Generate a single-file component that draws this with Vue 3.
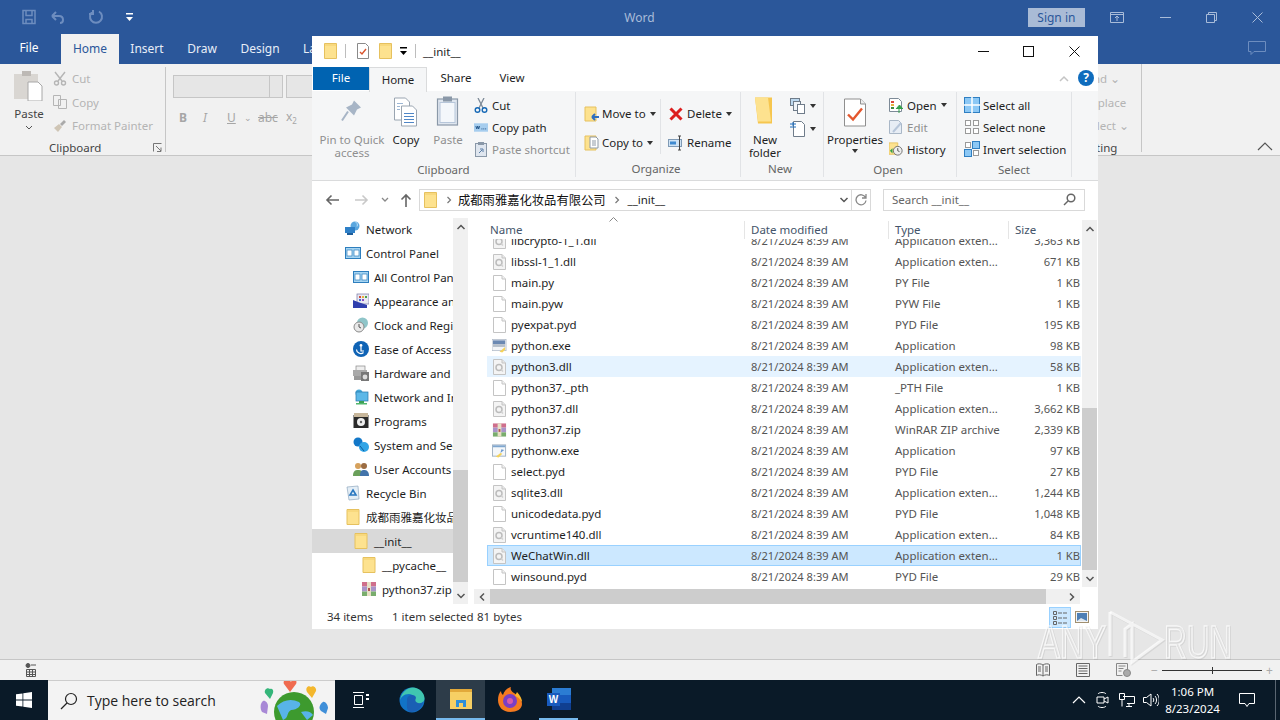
<script setup>
const files = [
  { name: 'libcrypto-1_1.dll', type: 'Application exten...', size: '3,363 KB', icon: 'dll' },
  { name: 'libssl-1_1.dll', type: 'Application exten...', size: '671 KB', icon: 'dll' },
  { name: 'main.py', type: 'PY File', size: '1 KB', icon: 'doc' },
  { name: 'main.pyw', type: 'PYW File', size: '1 KB', icon: 'doc' },
  { name: 'pyexpat.pyd', type: 'PYD File', size: '195 KB', icon: 'doc' },
  { name: 'python.exe', type: 'Application', size: '98 KB', icon: 'exe' },
  { name: 'python3.dll', type: 'Application exten...', size: '58 KB', icon: 'dll', state: 'hover' },
  { name: 'python37._pth', type: '_PTH File', size: '1 KB', icon: 'doc' },
  { name: 'python37.dll', type: 'Application exten...', size: '3,662 KB', icon: 'dll' },
  { name: 'python37.zip', type: 'WinRAR ZIP archive', size: '2,339 KB', icon: 'zip' },
  { name: 'pythonw.exe', type: 'Application', size: '97 KB', icon: 'exew' },
  { name: 'select.pyd', type: 'PYD File', size: '27 KB', icon: 'doc' },
  { name: 'sqlite3.dll', type: 'Application exten...', size: '1,244 KB', icon: 'dll' },
  { name: 'unicodedata.pyd', type: 'PYD File', size: '1,048 KB', icon: 'doc' },
  { name: 'vcruntime140.dll', type: 'Application exten...', size: '84 KB', icon: 'dll' },
  { name: 'WeChatWin.dll', type: 'Application exten...', size: '1 KB', icon: 'dll', state: 'selected' },
  { name: 'winsound.pyd', type: 'PYD File', size: '29 KB', icon: 'doc' }
]

const tree = [
  { label: 'Network', level: 0, icon: 'n-network' },
  { label: 'Control Panel', level: 0, icon: 'n-panel' },
  { label: 'All Control Panel Items', level: 1, icon: 'n-panel' },
  { label: 'Appearance and Personalization', level: 1, icon: 'n-appear' },
  { label: 'Clock and Region', level: 1, icon: 'n-clock' },
  { label: 'Ease of Access', level: 1, icon: 'n-ease' },
  { label: 'Hardware and Sound', level: 1, icon: 'n-hardware' },
  { label: 'Network and Internet', level: 1, icon: 'n-internet' },
  { label: 'Programs', level: 1, icon: 'n-programs' },
  { label: 'System and Security', level: 1, icon: 'n-system' },
  { label: 'User Accounts', level: 1, icon: 'n-users' },
  { label: 'Recycle Bin', level: 0, icon: 'n-bin' },
  { label: '成都雨雅嘉化妆品有限公司', level: 0, icon: 'folder' },
  { label: '__init__', level: 1, icon: 'folder', active: true },
  { label: '__pycache__', level: 2, icon: 'folder' },
  { label: 'python37.zip', level: 2, icon: 'zip' }
]

const wordTabs = ['Insert', 'Draw', 'Design', 'Layout']
</script>

<template>
  <div class="screen">
    <svg class="defs" width="0" height="0">
      <symbol id="folder" viewBox="0 0 13 16">
        <path d="M.5.500h12v15H.500z" fill="#fde28f" stroke="#e6c15e" />
        <path d="M1 2h11" stroke="#f3cf6c" />
      </symbol>
      <symbol id="doc" viewBox="0 0 13 16">
        <path d="M.5.500h8.500l3.500 3.500v11.500H.500z" fill="#fff" stroke="#c4c4c4" />
        <path d="M9 .5V4h3.500" fill="#f2f2f2" stroke="#c4c4c4" />
      </symbol>
      <symbol id="dll" viewBox="0 0 13 16">
        <path d="M.5.500h8.500l3.500 3.500v11.500H.500z" fill="#f4f4f4" stroke="#c4c4c4" />
        <path d="M9 .5V4h3.500" fill="#e8e8e8" stroke="#c4c4c4" />
        <circle cx="6" cy="8.500" r="3" fill="none" stroke="#bcbcbc" stroke-width="1.500" />
        <path d="M8 10.500l2 2" stroke="#cfcfcf" stroke-width="1.400" />
      </symbol>
      <symbol id="exe" viewBox="0 0 16 16">
        <rect x="0" y="1" width="15" height="12" fill="#f3f5f8" stroke="#a4b0c0" stroke-width=".7" />
        <rect x="1" y="2" width="13" height="4" fill="#6b89b3" />
        <rect x="1" y="6" width="13" height="3" fill="#b5bfca" />
        <path d="M8 14l6-5v3l-3 3z" fill="#f4d25a" />
      </symbol>
      <symbol id="exew" viewBox="0 0 16 16">
        <rect x=".5" y="1.500" width="14" height="12" fill="#f4f7fa" stroke="#9fb0c2" />
        <rect x="1" y="2" width="13" height="2" fill="#7ea6cf" />
        <path d="M10 6l3 1-4 3z" fill="#6d9bd0" />
        <path d="M4 14l5-4 2 1-4 4z" fill="#f4d25a" />
      </symbol>
      <symbol id="zip" viewBox="0 0 16 16">
        <rect x="1" y="1" width="14" height="4.500" fill="#cf6f8c" />
        <rect x="1" y="5.500" width="14" height="5" fill="#a993c9" />
        <rect x="1" y="10.500" width="14" height="4.500" fill="#79ad6d" />
        <rect x="6" y="1" width="4" height="14" fill="#e7e0c6" />
        <rect x="7" y="7" width="2" height="3" fill="#b25252" />
      </symbol>
      <symbol id="n-network" viewBox="0 0 16 16">
        <circle cx="10" cy="5" r="4.500" fill="#5aa7df" />
        <rect x="0" y="6" width="10" height="6" fill="#2f80c7" />
        <rect x="2" y="12" width="6" height="2" fill="#1f5d99" />
        <path d="M10 .5c2 1 3 3 2 5" stroke="#bfe0f6" fill="none" />
      </symbol>
      <symbol id="n-panel" viewBox="0 0 16 16">
        <rect x=".5" y="2.500" width="15" height="11" fill="#a7d5f2" stroke="#2e7ebd" />
        <rect x="2" y="5" width="5" height="6" fill="#fff" stroke="#2e7ebd" stroke-width=".7" />
        <rect x="9" y="5" width="5" height="6" fill="#fff" stroke="#2e7ebd" stroke-width=".7" />
      </symbol>
      <symbol id="n-appear" viewBox="0 0 16 16">
        <rect x="4" y="1" width="12" height="10" fill="#e9e9f2" stroke="#7777a5" stroke-width=".7" />
        <rect x="6" y="3" width="2" height="2" fill="#d14c3f" />
        <rect x="9" y="3" width="2" height="2" fill="#e9b23d" />
        <rect x="12" y="3" width="2" height="2" fill="#4aa04a" />
        <rect x="6" y="6" width="2" height="2" fill="#3f6fd1" />
        <rect x="9" y="6" width="2" height="2" fill="#8a4fc0" />
        <path d="M0 7l5 2 9 3v3H0z" fill="#2f3fae" />
      </symbol>
      <symbol id="n-clock" viewBox="0 0 16 16">
        <circle cx="9.500" cy="6" r="5.500" fill="#8fc5c9" />
        <circle cx="6" cy="10" r="5" fill="#e8e8e8" stroke="#8a8a8a" />
        <path d="M6 7v3l2 1" stroke="#555" fill="none" />
      </symbol>
      <symbol id="n-ease" viewBox="0 0 16 16">
        <circle cx="8" cy="8" r="8" fill="#0f63b5" />
        <circle cx="8" cy="4.500" r="1.400" fill="#fff" />
        <path d="M8 6v4h3M3.500 8.500c0 3 4 5.500 7 3" stroke="#fff" stroke-width="1.200" fill="none" />
      </symbol>
      <symbol id="n-hardware" viewBox="0 0 16 16">
        <rect x="3" y="1" width="9" height="5" fill="#eee" stroke="#888" stroke-width=".7" />
        <rect x="0" y="5" width="14" height="6" fill="#aaa" />
        <rect x="8" y="7" width="8" height="9" fill="#777" />
        <circle cx="12" cy="12" r="2.400" fill="#ddd" />
        <rect x="1" y="11" width="7" height="4" fill="#999" />
      </symbol>
      <symbol id="n-internet" viewBox="0 0 16 16">
        <circle cx="6" cy="4" r="3.500" fill="#45a7d8" />
        <rect x="3" y="3" width="12" height="9" fill="#5cb8e8" stroke="#2576a8" stroke-width=".7" />
        <rect x="6" y="12" width="5" height="2" fill="#3a9e54" />
        <rect x="3" y="14" width="11" height="1.500" fill="#52b56c" />
      </symbol>
      <symbol id="n-programs" viewBox="0 0 16 16">
        <rect x=".5" y="2" width="15" height="13" fill="#2a2a2a" />
        <rect x="1" y="0" width="14" height="4" fill="#c8b79b" />
        <circle cx="8" cy="9" r="4" fill="#efefef" />
        <circle cx="8" cy="9" r="1.200" fill="#666" />
      </symbol>
      <symbol id="n-system" viewBox="0 0 16 16">
        <circle cx="5" cy="5" r="4.500" fill="#1277c8" />
        <circle cx="11" cy="10" r="5" fill="#31a4e6" />
        <path d="M7 9l4 5" stroke="#0d5b9a" />
      </symbol>
      <symbol id="n-users" viewBox="0 0 16 16">
        <circle cx="5" cy="5" r="3" fill="#d6a15c" />
        <path d="M0 15c0-5 2-6 5-6s5 1 5 6z" fill="#6aa05a" />
        <circle cx="11" cy="5" r="3" fill="#9b6c42" />
        <path d="M7 15c0-5 1.500-6 4-6s5 1 5 6z" fill="#4273aa" />
      </symbol>
      <symbol id="n-bin" viewBox="0 0 16 16">
        <path d="M2 2l11-1 1 13-10 1z" fill="#e4eef6" stroke="#8fa8bf" stroke-width=".7" />
        <path d="M8 5l3 5H5z" fill="none" stroke="#2a78c0" stroke-width="1.600" />
      </symbol>
      <symbol id="chev" viewBox="0 0 8 8">
        <path d="M2.500 1l3 3-3 3" fill="none" stroke="#777" stroke-width="1.200" />
      </symbol>
      <symbol id="caret-up" viewBox="0 0 10 10">
        <path d="M1.500 7l3.500-3.500L8.500 7" fill="none" stroke="#555" stroke-width="1.500" />
      </symbol>
      <symbol id="caret-down" viewBox="0 0 10 10">
        <path d="M1.500 3l3.500 3.500L8.500 3" fill="none" stroke="#555" stroke-width="1.500" />
      </symbol>
    </svg>

    <!-- word behind -->
    <div class="word">
      <div class="w-title">
        <div class="qat">
          <svg width="16" height="16" viewBox="0 0 16 16" fill="none" stroke="#6d8dbf" stroke-width="1.500"><path d="M2 1.500h12v13H2zM5 1.500v5h6v-5M5 14.500v-4h6v4" /></svg>
          <svg class="q-undo" width="16" height="14" viewBox="0 0 16 14" fill="none" stroke="#6d8dbf" stroke-width="2"><path d="M2 6l4-4M2 6l4 4M2 6h7c3 0 4 2 4 4s-1 3-3 3" /></svg>
          <svg class="q-redo" width="16" height="16" viewBox="0 0 16 16" fill="none" stroke="#6d8dbf" stroke-width="2"><path d="M11 2.500a6 6 0 1 1-6 0M5 1v4H1" /></svg>
          <svg class="q-more" width="9" height="9" viewBox="0 0 9 9" fill="#fff"><rect x="1" y="0" width="7" height="1.500" /><path d="M1 4h7L4.500 8z" /></svg>
        </div>
        <div class="w-name">Word</div>
        <div class="w-sign">Sign in</div>
        <svg class="w-disp" width="14" height="12" viewBox="0 0 14 12" fill="none" stroke="#a9bcd9"><path d="M.5 1.500h13v10H.500zM.5 3.500h13M7 10V5M5 7l2-2 2 2" /></svg>
        <div class="w-ctl"><svg width="11" height="11" viewBox="0 0 11 11" stroke="#a9bcd9"><path d="M0 5.500h11" /></svg></div>
        <div class="w-ctl"><svg width="11" height="11" viewBox="0 0 11 11" fill="none" stroke="#a9bcd9"><path d="M.5 2.500h8v8h-8zM2.500 2.500v-2h8v8h-2" /></svg></div>
        <div class="w-ctl"><svg width="11" height="11" viewBox="0 0 11 11" stroke="#a9bcd9"><path d="M.5.500l10 10M10.500.500l-10 10" /></svg></div>
      </div>
      <div class="w-tabs">
        <div class="w-file">File</div>
        <div class="w-home">Home</div>
        <div v-for="t in wordTabs" :key="t" class="w-tab" :class="'t-' + t">{{ t }}</div>
        <svg class="w-comment" width="18" height="15" viewBox="0 0 18 15" fill="none" stroke="#6d8dbf"><path d="M.5.500h17v10H6l-3 3v-3H.500z" /></svg>
      </div>
      <div class="w-ribbon">
        <div class="w-clip">
          <div class="w-clip-top">
            <div class="w-paste">
              <svg width="30" height="30" viewBox="0 0 30 30">
                <rect x="0" y="3" width="24" height="25" fill="#d9d6d2" />
                <rect x="8" y="0" width="9" height="5" fill="#bdb9b5" />
                <path d="M14 11h10l4 4v15H14z" fill="#fff" stroke="#a8a8a8" />
              </svg>
              <div class="w-paste-t">Paste</div>
              <svg width="8" height="6" viewBox="0 0 8 6"><path d="M1 1l3 3 3-3" fill="none" stroke="#555" /></svg>
            </div>
            <div class="w-list">
              <div class="w-li">
                <svg width="14" height="15" viewBox="0 0 14 15" fill="none" stroke="#b5b5b5" stroke-width="1.400"><circle cx="3.500" cy="12" r="2" /><circle cx="10.500" cy="12" r="2" /><path d="M2 1l7 9M12 1l-7 9" /></svg>
                <span>Cut</span>
              </div>
              <div class="w-li">
                <svg width="14" height="14" viewBox="0 0 14 14" fill="#f1f1f1" stroke="#b5b5b5"><path d="M.5.500h7v10h-7zM5.500 4.500h8v9h-8z" /></svg>
                <span>Copy</span>
              </div>
              <div class="w-li">
                <svg width="14" height="14" viewBox="0 0 14 14"><path d="M1 9l5-4 3 3-4 5z" fill="#cfc5b5" /><path d="M7 5l4-4 2 2-4 4z" fill="#aaa" /></svg>
                <span>Format Painter</span>
              </div>
            </div>
          </div>
          <div class="w-glabel">
            <span>Clipboard</span>
            <svg class="w-launch" width="9" height="9" viewBox="0 0 9 9" fill="none" stroke="#777"><path d="M.5 8.500v-8h8M3 3l5 5M8 4.500v4H4" /></svg>
          </div>
        </div>
        <div class="w-font">
          <div class="w-combos">
            <div class="w-combo w-combo-a"><div class="w-drop"></div></div>
            <div class="w-combo w-combo-b"></div>
          </div>
          <div class="w-fmt">
            <b>B</b>
            <i>I</i>
            <u>U</u>
            <span class="w-fmt-c">⌄</span>
            <s>abc</s>
            <span>x<sub>2</sub></span>
          </div>
        </div>
        <div class="w-edit">
          <div class="w-edit-li">Find ⌄</div>
          <div class="w-edit-li">Replace</div>
          <div class="w-edit-li">Select ⌄</div>
          <div class="w-edit-label">Editing</div>
        </div>
        <div class="w-collapse">
          <svg width="16" height="9" viewBox="0 0 16 9" fill="none" stroke="#555" stroke-width="1.200"><path d="M1 8l7-7 7 7" /></svg>
        </div>
      </div>
      <div class="w-doc"></div>
      <div class="w-status">
        <svg class="w-macro" width="12" height="14" viewBox="0 0 12 14" fill="none" stroke="#555"><circle cx="3" cy="2.500" r="2" fill="#555" /><path d="M6 2h5M1.500 6.500h9v7h-9zM1.500 9h9M1.500 11.500h9M4.500 6.500v7M7.500 6.500v7" /></svg>
        <svg class="w-view" width="14" height="14" viewBox="0 0 14 14" fill="none" stroke="#666"><path d="M7 2C5 .5 2 .5 .5 1.500v11c1.500-1 4.500-1 6.500.5 2-1.500 5-1.500 6.500-.5v-11C12 .5 9 .5 7 2zM7 2v11M2 4h3M2 6h3M2 8h3M9 4h3M9 6h3M9 8h3" /></svg>
        <svg class="w-view" width="14" height="14" viewBox="0 0 14 14" fill="none" stroke="#666"><path d="M.5.500h13v13H.500zM2.500 3h9M2.500 5.500h9M2.500 8h9M2.500 10.500h9" /></svg>
        <svg class="w-view" width="16" height="14" viewBox="0 0 16 14" fill="none" stroke="#888"><path d="M.5.500h11v8M.5.500v12h6M2.500 3h7M2.500 5.500h5M2.500 8h3" /><circle cx="11" cy="10" r="3.500" fill="#aaa" /></svg>
        <div class="w-zoom">
          <span class="w-z-sign">−</span>
          <div class="w-z-line"><i></i></div>
          <span class="w-z-sign">+</span>
        </div>
      </div>
    </div>

    <!-- explorer window -->
    <div class="win">
      <div class="x-title">
        <svg class="ti" width="13" height="16"><use href="#folder" /></svg>
        <i class="x-sep"></i>
        <svg class="ti t-prop" width="12" height="16" viewBox="0 0 12 16"><path d="M.5.500h8l3 3v12H.500z" fill="#fff" stroke="#8a8a8a" /><path d="M3 9l2 2 4-5" fill="none" stroke="#d9532c" stroke-width="1.400" /></svg>
        <svg class="ti t-fold2" width="13" height="16"><use href="#folder" /></svg>
        <svg class="t-more" width="9" height="9" viewBox="0 0 9 9"><rect x="1" y="0" width="7" height="1.500" /><path d="M1 4h7L4.500 8z" /></svg>
        <i class="x-sep x-sep2"></i>
        <span class="x-name">__init__</span>
        <div class="x-ctls">
          <div class="x-ctl"><svg width="11" height="11" viewBox="0 0 11 11" stroke="#111"><path d="M0 5.500h11" /></svg></div>
          <div class="x-ctl"><svg width="11" height="11" viewBox="0 0 11 11" fill="none" stroke="#111"><rect x=".5" y=".5" width="10" height="10" /></svg></div>
          <div class="x-ctl"><svg width="11" height="11" viewBox="0 0 11 11" stroke="#111"><path d="M.5.500l10 10M10.500.500l-10 10" /></svg></div>
        </div>
      </div>

      <div class="x-tabs">
        <div class="x-file">File</div>
        <div class="x-home">Home</div>
        <div class="x-tab x-share">Share</div>
        <div class="x-tab x-viewtab">View</div>
        <svg class="x-min" width="10" height="7" viewBox="0 0 10 7" fill="none" stroke="#c4c4c4" stroke-width="1.500"><path d="M1 6l4-4 4 4" /></svg>
        <div class="x-help">?</div>
      </div>

      <div class="x-ribbon">
        <div class="grp g-clip">
          <div class="grp-body">
            <div class="big big-pin off">
              <svg width="26" height="34" viewBox="0 0 26 34"><path d="M15 5l7 7-4 2-3 6-8-8 6-3z" fill="#a7b5c6" /><path d="M9 16l-6 9" stroke="#a7b5c6" stroke-width="2" /></svg>
              <span class="nowrap">Pin to Quick<br />access</span>
            </div>
            <div class="big big-copy">
              <svg width="26" height="34" viewBox="0 0 26 34">
                <path d="M1.500 2.500h11l4 4v18h-15z" fill="#fff" stroke="#9aa5b1" />
                <path d="M8.500 10.500h11l4 4v16h-15z" fill="#fff" stroke="#9aa5b1" />
                <path d="M11 18h10M11 21h10M11 24h10M11 27h10" stroke="#4f86c6" />
                <path d="M4 8h6M4 11h3M4 14h3" stroke="#9cb6d4" />
              </svg>
              <span>Copy</span>
            </div>
            <div class="big big-paste off">
              <svg width="24" height="34" viewBox="0 0 24 34">
                <rect x="1.500" y="3.500" width="20" height="26" fill="#dfe6ef" stroke="#8a98a8" stroke-width="1.200" />
                <rect x="4" y="7" width="15" height="20" fill="#f4f7fb" stroke="#b7c6da" />
                <rect x="7" y="1" width="9" height="5" fill="#8a98a8" />
              </svg>
              <span>Paste</span>
            </div>
            <div class="small-col c-clip">
              <div class="small">
                <svg class="s-ic" width="14" height="15" viewBox="0 0 14 15"><path d="M4 0l5 10M10 0L5 10" stroke="#7d8a97" stroke-width="1.300" /><circle cx="3.500" cy="12" r="2.300" fill="none" stroke="#1769b6" stroke-width="1.400" /><circle cx="10.500" cy="12" r="2.300" fill="none" stroke="#1769b6" stroke-width="1.400" /></svg>
                <span>Cut</span>
              </div>
              <div class="small">
                <svg class="s-ic" width="15" height="9" viewBox="0 0 15 9"><rect width="15" height="9" fill="#a6cdee" /><path d="M2 3l1 3 1-3 1 3 1-3M8 6h1M10 6h1M12 6h1" stroke="#1c4f83" fill="none" /></svg>
                <span>Copy path</span>
              </div>
              <div class="small off">
                <svg class="s-ic" width="12" height="15" viewBox="0 0 12 15"><rect x=".5" y="1.500" width="11" height="13" fill="#dfe6ef" stroke="#8a98a8" /><rect x="3" y="0" width="6" height="3" fill="#8a98a8" /><path d="M4 11l3-3M5 7h3v3" stroke="#5a7da5" fill="none" /></svg>
                <span>Paste shortcut</span>
              </div>
            </div>
          </div>
          <div class="grp-label">Clipboard</div>
        </div>

        <div class="grp g-org">
          <div class="grp-body">
            <div class="wide-col c-move">
              <div class="wide">
                <svg class="w-ic" width="16" height="16" viewBox="0 0 16 16"><path d="M1 1h11v14H1z" fill="#fde28f" stroke="#e6c15e" /><path d="M15 11H8M8 11l3-3M8 11l3 3" stroke="#2e6fc0" stroke-width="1.800" fill="none" /></svg>
                <span>Move to</span><i class="car"></i>
              </div>
              <div class="wide">
                <svg class="w-ic" width="16" height="16" viewBox="0 0 16 16"><path d="M1 1h11v14H1z" fill="#fde28f" stroke="#e6c15e" /><path d="M6 2h6l2 2v9H6z" fill="#fff" stroke="#8f9aa6" /><path d="M8 6h4M8 8h4M8 10h4" stroke="#8f9aa6" /></svg>
                <span>Copy to</span><i class="car"></i>
              </div>
            </div>
            <div class="wide-col c-del">
              <div class="wide">
                <svg class="w-ic2" width="16" height="16" viewBox="0 0 16 16"><path d="M2.500 2.500l11 11M13.500 2.500l-11 11" stroke="#dc1f1f" stroke-width="3" /></svg>
                <span>Delete</span><i class="car"></i>
              </div>
              <div class="wide">
                <svg class="w-ic2" width="16" height="16" viewBox="0 0 16 16"><rect x=".5" y="4.500" width="13" height="7" fill="#cfe3f5" stroke="#7f9ab5" /><rect x="2" y="6.500" width="6" height="3" fill="#3f8ad0" /><path d="M10 1h3M10 15h3M11.500 1v14" stroke="#444" fill="none" /></svg>
                <span>Rename</span>
              </div>
            </div>
          </div>
          <div class="grp-label">Organize</div>
        </div>

        <div class="grp g-new">
          <div class="grp-body">
            <div class="big big-newf">
              <svg width="24" height="34" viewBox="0 0 24 34"><path d="M2 2h17v26H5z" fill="#f6c64f" /><path d="M2 2h13l3 24H5z" fill="#fde28f" /></svg>
              <span>New<br />folder</span>
            </div>
            <div class="new-col">
              <div class="new-li">
                <svg width="16" height="16" viewBox="0 0 16 16" stroke="#6f7c8a"><rect x=".5" y=".5" width="9" height="7" fill="#bcd8ef" /><rect x="3.500" y="3.500" width="7" height="9" fill="#eef3f8" /><rect x="7.500" y="6.500" width="7" height="9" fill="#fff" /></svg>
                <i class="car"></i>
              </div>
              <div class="new-li">
                <svg width="16" height="16" viewBox="0 0 16 16" fill="none" stroke="#6f7c8a"><path d="M3.500 .5h8l3 3v12h-11z" fill="#fff" /><path d="M0 3h6M0 6h6M3 1v4" stroke="#1f6fbe" /></svg>
                <i class="car"></i>
              </div>
            </div>
          </div>
          <div class="grp-label">New</div>
        </div>

        <div class="grp g-open">
          <div class="grp-body">
            <div class="big big-prop">
              <svg width="24" height="34" viewBox="0 0 24 34"><path d="M1.500 3.500h16l5 5v22h-21z" fill="#fff" stroke="#8f8f8f" /><path d="M17.500 3.500v5h5" fill="#eee" stroke="#8f8f8f" /><path d="M5 19l5 5 9-11" fill="none" stroke="#e4572e" stroke-width="2.400" /></svg>
              <span>Properties</span>
              <i class="car car-big"></i>
            </div>
            <div class="small-col c-open">
              <div class="small">
                <svg class="s-ic" width="14" height="15" viewBox="0 0 14 15"><path d="M.5.500h9l3 3v10H.500z" fill="#fff" stroke="#7d8a97" /><rect x="2" y="3" width="3" height="2" fill="#d9483b" /><rect x="2" y="6" width="3" height="2" fill="#e9b23d" /><rect x="2" y="9" width="3" height="2" fill="#3f8a3f" /><path d="M10 15v-5M7 11l3.500-4 3.500 4" fill="#34a04a" stroke="#34a04a" /></svg>
                <span>Open</span><i class="car"></i>
              </div>
              <div class="small off">
                <svg class="s-ic" width="14" height="15" viewBox="0 0 14 15"><path d="M.5.500h9l3 3v10H.500z" fill="#e7edf5" stroke="#a9b7c7" /><path d="M4 12l8-9" stroke="#b7c6da" stroke-width="2" /></svg>
                <span>Edit</span>
              </div>
              <div class="small">
                <svg class="s-ic" width="16" height="16" viewBox="0 0 16 16"><path d="M0 1h10v13H0z" fill="#fde28f" stroke="#e6c15e" /><circle cx="10" cy="10" r="5" fill="#eee" stroke="#666" /><path d="M10 7v3l2 1" stroke="#444" fill="none" /><path d="M1 10l3-3v6z" fill="#34a04a" /></svg>
                <span>History</span>
              </div>
            </div>
          </div>
          <div class="grp-label">Open</div>
        </div>

        <div class="grp g-sel">
          <div class="grp-body">
            <div class="small-col c-sel">
              <div class="small">
                <svg class="s-ic16" width="16" height="16" viewBox="0 0 16 16"><rect x=".5" y=".5" width="15" height="15" fill="#8cc8f5" stroke="#2f7fc2" /><path d="M8 0v16M0 8h16" stroke="#fff" stroke-width="1.500" /></svg>
                <span>Select all</span>
              </div>
              <div class="small">
                <svg class="s-ic16" width="16" height="16" viewBox="0 0 16 16" fill="#fff" stroke="#9a9a9a"><rect x="1.500" y="1.500" width="5" height="5" /><rect x="9.500" y="1.500" width="5" height="5" /><rect x="1.500" y="9.500" width="5" height="5" /><rect x="9.500" y="9.500" width="5" height="5" /></svg>
                <span>Select none</span>
              </div>
              <div class="small">
                <svg class="s-ic16" width="16" height="16" viewBox="0 0 16 16" stroke="#2f7fc2"><rect x="1.500" y="1.500" width="5" height="5" fill="#fff" stroke="#9a9a9a" /><rect x="8.500" y=".5" width="7" height="7" fill="#8cc8f5" /><rect x=".5" y="8.500" width="7" height="7" fill="#8cc8f5" /><rect x="9.500" y="9.500" width="5" height="5" fill="#fff" stroke="#9a9a9a" /></svg>
                <span>Invert selection</span>
              </div>
            </div>
          </div>
          <div class="grp-label">Select</div>
        </div>
      </div>

      <div class="x-addr">
        <svg class="a-back" width="14" height="12" viewBox="0 0 14 12" fill="none" stroke="#666" stroke-width="1.600"><path d="M14 6H2M6.500 1.500L2 6l4.500 4.500" /></svg>
        <svg class="a-fwd" width="14" height="12" viewBox="0 0 14 12" fill="none" stroke="#c9c9c9" stroke-width="1.600"><path d="M0 6h12M7.500 1.500L12 6l-4.500 4.500" /></svg>
        <svg class="a-down" width="8" height="6" viewBox="0 0 8 6" fill="none" stroke="#888" stroke-width="1.300"><path d="M1 1l3 3 3-3" /></svg>
        <svg class="a-up" width="12" height="14" viewBox="0 0 12 14" fill="none" stroke="#666" stroke-width="1.600"><path d="M6 14V2M1.500 6.500L6 2l4.500 4.500" /></svg>
        <div class="a-box">
          <svg class="a-folder" width="13" height="16"><use href="#folder" /></svg>
          <svg class="a-chev" width="8" height="8"><use href="#chev" /></svg>
          <span class="a-cn">成都雨雅嘉化妆品有限公司</span>
          <svg class="a-chev a-chev2" width="8" height="8"><use href="#chev" /></svg>
          <span class="a-in">__init__</span>
          <svg class="a-dd" width="10" height="10"><use href="#caret-down" /></svg>
          <div class="a-ref">
            <svg width="12" height="13" viewBox="0 0 12 13" fill="none" stroke="#888" stroke-width="1.300"><path d="M10.500 4.500a5 5 0 1 0 .5 3M11 1v4H7" /></svg>
          </div>
        </div>
        <div class="a-search">
          <span>Search __init__</span>
          <svg width="13" height="13" viewBox="0 0 13 13" fill="none" stroke="#666" stroke-width="1.500"><circle cx="8" cy="5" r="3.800" /><path d="M5 8l-4 4" /></svg>
        </div>
      </div>

      <div class="x-body">
        <div class="nav">
          <div class="nav-list">
            <div v-for="n in tree" :key="n.label" class="nav-row" :class="['lv' + n.level, { active: n.active }]">
              <svg class="nav-ic" width="16" height="16"><use :href="'#' + n.icon" /></svg>
              <span>{{ n.label }}</span>
            </div>
          </div>
          <div class="sb sb-nav">
            <svg class="sb-arrow" width="10" height="10"><use href="#caret-up" /></svg>
            <div class="sb-thumb"></div>
            <svg class="sb-arrow sb-end" width="10" height="10"><use href="#caret-down" /></svg>
          </div>
        </div>
        <div class="pane">
          <div class="head">
            <svg class="sort" width="9" height="5" viewBox="0 0 9 5" fill="none" stroke="#888"><path d="M.5 4.500l4-4 4 4" /></svg>
            <div class="h-name">Name</div>
            <div class="h-date">Date modified</div>
            <div class="h-type">Type</div>
            <div class="h-size">Size</div>
          </div>
          <div class="rows">
            <div v-for="f in files" :key="f.name" class="row" :class="f.state">
              <div class="c-name">
                <svg width="15" height="16" class="r-ic"><use :href="'#' + f.icon" /></svg>
                <span>{{ f.name }}</span>
              </div>
              <div class="c-date">8/21/2024 8:39 AM</div>
              <div class="c-type">{{ f.type }}</div>
              <div class="c-size">{{ f.size }}</div>
            </div>
          </div>
          <div class="hsb">
            <svg width="10" height="10" viewBox="0 0 10 10" fill="none" stroke="#555" stroke-width="1.500"><path d="M7 1.500L3.500 5 7 8.500" /></svg>
            <div class="hsb-thumb"></div>
            <svg class="hsb-end" width="10" height="10" viewBox="0 0 10 10" fill="none" stroke="#555" stroke-width="1.500"><path d="M3 1.500L6.500 5 3 8.500" /></svg>
          </div>
        </div>
        <div class="sb sb-main">
          <svg class="sb-arrow" width="10" height="10"><use href="#caret-up" /></svg>
          <div class="sb-thumb"></div>
          <svg class="sb-arrow" width="10" height="10"><use href="#caret-down" /></svg>
        </div>
      </div>

      <div class="x-status">
        <span class="st-a">34 items</span>
        <span class="st-b">1 item selected</span>
        <span class="st-c">81 bytes</span>
        <div class="st-det">
          <svg width="16" height="16" viewBox="0 0 16 16" fill="none" stroke="#666"><path d="M1.500 1.500h3v3h-3zM1.500 6.500h3v3h-3zM1.500 11.500h3v3h-3zM6 3h4M11 3h4M6 8h4M11 8h4M6 13h4M11 13h4" /></svg>
        </div>
        <svg class="st-lg" width="14" height="12" viewBox="0 0 14 12"><rect x=".5" y=".5" width="13" height="11" fill="#f4f4f4" stroke="#a08f70" /><rect x="2" y="2" width="10" height="8" fill="#4d7fb5" /><path d="M2 10l4-3 6 3z" fill="#dde6ef" /></svg>
      </div>
    </div>

    <!-- taskbar -->
    <div class="taskbar">
      <div class="start">
        <svg width="16" height="16" viewBox="0 0 16 16" fill="#fff"><path d="M0 2.300l6.500-.9v6.200H0zM7.300 1.300L16 0v7.600H7.300zM0 8.400h6.500v6.200L0 13.700zM7.300 8.400H16V16l-8.700-1.200z" /></svg>
      </div>
      <div class="search">
        <svg class="s-glass" width="18" height="18" viewBox="0 0 18 18" fill="none" stroke="#222" stroke-width="1.200"><circle cx="11" cy="7" r="5.500" /><path d="M7 11l-6 6" /></svg>
        <span class="s-text">Type here to search</span>
        <svg class="s-globe" width="74" height="44" viewBox="0 0 74 44">
          <circle cx="37" cy="36" r="20" fill="#3d9a2e" />
          <path d="M20 30c6-6 14-8 22-4 4 3-2 8-8 8-5 3-2 8-8 10zM44 36c6-2 10 0 12 3l-6 5z" fill="#58b4e8" />
          <path d="M34 6c-3-5-9-2-7 2l6 8 6-8c2-4-3-7-5-2z" fill="#f06b4f" />
          <path d="M13 13c-3-2-6 1-5 4l5 6 3-6c1-3-1-5-3-4z" fill="#35b67a" />
          <path d="M54 11c-3-2-6 1-4 5l5 6 4-7c1-3-3-6-5-4z" fill="#f3b72d" />
          <path d="M6 25c-3 2-3 8-1 11l5 2 1-8c0-3-3-6-5-5z" fill="#a888d6" />
          <path d="M66 26c-3 2-5 6-2 9l5 3 2-6c0-3-3-7-5-6z" fill="#3f8fd8" />
        </svg>
      </div>
      <div class="tb tb-task">
        <svg width="16" height="16" viewBox="0 0 16 16" fill="none" stroke="#fff"><path d="M0 .5h11M0 15.500h11M1.500 3.500h8v9h-8z" /><path d="M13 3h3M13 7h3" stroke-width="2" /></svg>
      </div>
      <div class="tb tb-edge">
        <svg width="26" height="26" viewBox="0 0 26 26">
          <circle cx="13" cy="13" r="12.500" fill="#1173c7" />
          <path d="M1 15C1 6 8 .500 14 .500c6 0 11.500 5 11.500 11 0 4-4 5-7 5-2.500 0-4-1-3-2.500 1.500-3-1-7-5.500-7C5 7 1 10 1 15z" fill="#40c6b0" />
          <path d="M8 13c0-3 2-5 5-5 2 0 4 1 4 3-1 2-1 4 2 5 2 1 4 0 5-1-1 6-6 10-12 10-5 0-4-7-4-12z" fill="#1a5fb4" />
        </svg>
      </div>
      <div class="tb tb-exp">
        <svg width="24" height="20" viewBox="0 0 24 20">
          <rect x="1" y="0" width="22" height="20" fill="#f6cf64" />
          <rect x="1" y="0" width="22" height="3" fill="#e2a93a" />
          <rect x="7" y="11" width="10" height="7" fill="#2f8fd8" />
          <rect x="10" y="14" width="4" height="4" fill="#f6cf64" />
        </svg>
      </div>
      <div class="tb tb-fx">
        <svg width="24" height="26" viewBox="0 0 24 26">
          <path d="M12 25C5 25 0 20 0 13 0 9 1 6 3 4c0 2 1 3 2 4 1-4 4-7 8-8-1 2 0 4 3 6 4 3 8 5 8 11 0 5-5 8-12 8z" fill="#f47a1f" />
          <path d="M19 5c3 3 5 7 5 10-2-3-4-5-7-6z" fill="#fbb52b" />
          <circle cx="12" cy="14" r="7" fill="#7a3fc4" />
          <circle cx="12" cy="14" r="3" fill="#d75ba8" />
        </svg>
      </div>
      <div class="tb tb-word">
        <svg width="24" height="22" viewBox="0 0 24 22">
          <rect x="5" y="0" width="19" height="22" fill="#2b7cd3" />
          <rect x="5" y="15" width="19" height="7" fill="#103f91" />
          <rect x="5" y="7" width="19" height="8" fill="#185abd" />
          <rect x="0" y="5" width="13" height="13" fill="#185abd" />
          <text x="6.500" y="15" class="tb-w">W</text>
        </svg>
      </div>
      <div class="tray">
        <div class="tr"><svg width="14" height="8" viewBox="0 0 14 8" fill="none" stroke="#fff" stroke-width="1.200"><path d="M1 7l6-6 6 6" /></svg></div>
        <div class="tr"><svg width="14" height="18" viewBox="0 0 14 18" fill="none" stroke="#fff"><path d="M2 3c1-2 7-2 8 0M2 15c1 2 7 2 8 0M1 6h7v6H1zM8 8l4-2v6l-4-2" /></svg></div>
        <div class="tr"><svg width="16" height="14" viewBox="0 0 16 14" fill="none" stroke="#fff"><path d="M.5.500h5v6h-5zM4 3.500h11.500v7H8M3 6.500v7M7 13.500h6M10 10.500v3" /></svg></div>
        <div class="tr"><svg width="16" height="14" viewBox="0 0 16 14" fill="none" stroke="#fff"><path d="M.5 4.500h3L8 1v12L3.500 9.500h-3zM10 5c1 1 1 3 0 4M12 3c2 2 2 6 0 8M14 1c3 3 3 9 0 12" /></svg></div>
        <div class="clock"><div>1:06 PM</div><div>8/23/2024</div></div>
        <div class="notif"><svg width="16" height="16" viewBox="0 0 16 16" fill="none" stroke="#fff"><path d="M.5 1.500h15v10H10l-2 3-2-3H.500z" /></svg></div>
        <div class="show"></div>
      </div>
    </div>

    <!-- watermark over everything -->
    <svg class="mark" width="200" height="60" viewBox="0 0 200 60">
      <text x="2" y="50" class="m-text" textLength="68" lengthAdjust="spacingAndGlyphs">ANY</text>
      <path d="M74 4l52 28-30 22V16l-7 5v28" fill="none" stroke="#fff" stroke-opacity=".7" stroke-width="3" />
      <path d="M74 4v44" fill="none" stroke="#fff" stroke-opacity=".7" stroke-width="3" />
      <text x="128" y="50" class="m-text" textLength="68" lengthAdjust="spacingAndGlyphs">RUN</text>
    </svg>
  </div>
</template>

<style>
html, body { margin: 0; background: #e6e6e6; }
</style>

<style scoped>
.screen {
  position: relative;
  width: 1280px;
  height: 720px;
  overflow: hidden;
  font-family: "Noto Sans", "Noto Sans CJK SC", sans-serif;
  font-size: 11.5px;
  color: #333;
  display: flex;
  flex-direction: column;
}
.defs { position: absolute; }
svg { display: block; flex: none; }
.nowrap { white-space: nowrap; }

/* word */
.word { height: 680px; display: flex; flex-direction: column; }
.w-title { height: 34px; background: #2b579a; display: flex; align-items: center; }
.qat { display: flex; align-items: center; padding-left: 21px; width: 605px; box-sizing: border-box; }
.q-undo { margin-left: 13px; }
.q-redo { margin-left: 22px; }
.q-more { margin-left: 21px; }
.w-name { width: 79px; text-align: center; color: #a9bcd9; font-size: 12px; }
.w-sign { margin-left: 349px; width: 58px; height: 19px; line-height: 19px; text-align: center; background: #a9bbd6; color: #2b579a; font-size: 12px; }
.w-disp { margin-left: 25px; }
.w-ctl { width: 46px; display: flex; justify-content: center; }
.w-disp + .w-ctl { margin-left: 19px; }
.w-tabs { height: 30px; background: #2b579a; display: flex; align-items: stretch; color: #fff; font-size: 12px; }
.w-file { width: 58px; text-align: center; line-height: 28px; }
.w-home { margin-left: 3px; width: 58px; text-align: center; line-height: 30px; background: #f1f1f1; color: #2b579a; }
.w-tab { text-align: center; line-height: 30px; color: #e8eef7; }
.t-Insert { width: 56px; }
.t-Draw { width: 54px; }
.t-Design { width: 62px; }
.t-Layout { width: 62px; }
.w-comment { margin: 7px 14px 0 auto; }
.w-ribbon { height: 92px; background: #f1f1f1; display: flex; border-bottom: 1px solid #c6c6c6; box-sizing: border-box; }
.w-clip { width: 166px; box-sizing: content-box; display: flex; flex-direction: column; position: relative; }
.w-clip::after { content: ""; position: absolute; right: 0; top: 3px; bottom: 3px; width: 1px; background: #c6c6c6; }
.w-clip-top { display: flex; height: 75px; }
.w-paste { width: 58px; display: flex; flex-direction: column; align-items: center; padding-top: 7px; box-sizing: border-box; }
.w-paste-t { color: #444; font-size: 11.5px; line-height: 16px; margin-top: 5px; }
.w-paste svg:last-child { margin-top: 3px; }
.w-list { padding-top: 3px; color: #b4b4b4; font-size: 11.5px; }
.w-li { height: 23.5px; display: flex; align-items: center; gap: 5px; margin-left: -5px; }
.w-glabel { display: flex; align-items: center; height: 16px; color: #444; font-size: 11.5px; position: relative; padding-left: 49px; }
.w-launch { position: absolute; left: 153px; top: 4px; }
.w-font { padding: 11px 0 0 7px; width: 1px; flex: 1 1 auto; }
.w-combos { display: flex; gap: 3px; }
.w-combo { height: 23px; background: #e6e6e6; border: 1px solid #c6c6c6; box-sizing: border-box; }
.w-combo-a { width: 110px; position: relative; }
.w-drop { position: absolute; right: 0; top: 0; bottom: 0; width: 12px; border-left: 1px solid #c6c6c6; }
.w-combo-b { width: 60px; }
.w-fmt { display: flex; align-items: center; height: 22px; margin-top: 8px; color: #a6a6a6; font-size: 12px; padding-left: 6px; }
.w-fmt b { width: 24px; }
.w-fmt i { width: 24px; }
.w-fmt u { width: 17px; }
.w-fmt-c { width: 14px; font-size: 9px; }
.w-fmt s { width: 28px; }
.w-fmt sub { font-size: 8px; }
.w-edit { width: 70px; margin-left: auto; padding: 3px 0 0 12px; box-sizing: border-box; border-right: 1px solid #c6c6c6; margin-bottom: 3px; color: #b4b4b4; font-size: 11.5px; }
.w-edit-li { height: 23.5px; line-height: 23.5px; white-space: nowrap; }
.w-edit-label { color: #444; margin: 2px 16px 0 -12px; text-align: center; line-height: 16px; }
.w-collapse { width: 138px; display: flex; justify-content: flex-end; align-items: flex-end; padding: 0 7px 4px 0; box-sizing: border-box; }
.w-doc { flex: 1; background: #e6e6e6; border-bottom: 1px solid #c6c6c6; }
.w-status { height: 20px; background: #f1f1f1; display: flex; align-items: center; }
.w-macro { margin-left: 25px; }
.w-view { margin-left: 26px; }
.w-macro + .w-view { margin-left: 999px; }
.w-zoom { display: flex; align-items: center; margin-left: 19px; color: #aaa; font-size: 12px; gap: 4px; }
.w-z-line { width: 100px; height: 1px; background: #333; position: relative; }
.w-z-line i { position: absolute; left: 50px; top: -3px; width: 1px; height: 7px; background: #333; }

/* explorer */
.win {
  position: absolute;
  left: 312px;
  top: 36px;
  width: 786px;
  height: 593px;
  background: #fff;
  display: flex;
  flex-direction: column;
  color: #1e1e1e;
}
.x-title { height: 30px; display: flex; align-items: center; padding-left: 12px; box-sizing: border-box; }
.x-sep { width: 1px; height: 14px; background: #bdbdbd; margin-left: 8px; }
.t-prop { margin-left: 11px; }
.t-fold2 { margin-left: 10px; }
.t-more { margin-left: 7px; }
.x-sep2 { margin-left: 7px; }
.x-name { margin-left: 7px; }
.x-ctls { margin-left: auto; display: flex; padding-right: 1px; }
.x-ctl { width: 45.5px; display: flex; justify-content: center; }
.x-tabs { height: 25px; display: flex; align-items: stretch; position: relative; font-size: 11.5px; }
.x-file { margin: 1px 0 1px 1px; width: 56px; background: #0063b1; color: #fff; text-align: center; line-height: 22px; }
.x-home { width: 58px; text-align: center; line-height: 23px; border: 1px solid #dadbdc; border-bottom: 0; box-sizing: border-box; position: relative; top: 1px; background: #f5f6f7; z-index: 1; }
.x-tab { text-align: center; line-height: 24px; }
.x-share { width: 58px; }
.x-viewtab { width: 54px; }
.x-min { position: absolute; left: 747px; top: 9px; }
.x-help { position: absolute; left: 766px; top: 4px; width: 16px; height: 16px; border-radius: 50%; background: #0f6cbd; color: #fff; text-align: center; font-weight: 700; line-height: 16px; font-size: 12px; }
.x-ribbon { height: 90px; background: #f5f6f7; border-bottom: 1px solid #dadbdc; box-sizing: border-box; display: flex; }
.grp { box-sizing: border-box; border-right: 1px solid #e1e3e6; display: flex; flex-direction: column; height: 85px; margin-top: 1px; }
.g-clip { width: 264px; }
.g-org { width: 165px; }
.g-new { width: 83px; }
.g-open { width: 133px; }
.g-sel { width: 115px; }
.grp-body { height: 69px; display: flex; padding-top: 2px; margin-bottom: 2px; box-sizing: content-box; }
.grp-label { text-align: center; color: #666; line-height: 16px; margin-top: 0; }
.g-org .grp-label, .g-new .grp-label, .g-open .grp-label { padding-right: 4px; }
.off { color: #8f8f8f; }
.big { display: flex; flex-direction: column; align-items: center; line-height: 13px; text-align: center; }
.big svg { margin-bottom: 2px; height: 37px; }
.big-pin { width: 62px; margin-left: 9px; }
.big-copy { width: 46px; }
.big-paste { width: 38px; }
.big-newf { width: 48px; }
.big-prop { width: 62px; }
.car { display: block; width: 0; height: 0; border: 3px solid transparent; border-top: 4px solid #333; border-bottom: 0; margin-left: 4px; flex: none; }
.car-big { margin: 3px 0 0; }
.small-col { display: flex; flex-direction: column; }
.small { height: 22px; display: flex; align-items: center; white-space: nowrap; }
.s-ic { width: 14px; margin-right: 4px; }
.c-clip { margin-left: 7px; }
.c-open { margin-left: 3px; }
.c-open .s-ic { margin-right: 4px; }
.s-ic16 { margin-right: 3px; }
.c-sel { margin-left: 7px; }
.wide-col { display: flex; flex-direction: column; padding-top: 5px; }
.wide { height: 29px; display: flex; align-items: center; white-space: nowrap; }
.c-move { width: 85px; padding-left: 8px; box-sizing: border-box; position: relative; }
.c-move::after { content: ""; position: absolute; right: 0; top: 5px; bottom: 5px; width: 1px; background: #e1e3e6; }
.c-del { padding-left: 7px; }
.w-ic { margin-right: 2px; }
.w-ic2 { margin-right: 3px; }
.new-col { margin-left: 1px; }
.new-li { height: 23px; display: flex; align-items: center; }
.x-addr { height: 37px; display: flex; align-items: center; position: relative; }
.a-back { margin-left: 13px; }
.a-fwd { margin-left: 16px; }
.a-down { margin-left: 12px; }
.a-up { margin-left: 11px; }
.a-box { margin-left: 7px; width: 452px; height: 22px; border: 1px solid #d9d9d9; box-sizing: border-box; display: flex; align-items: center; }
.a-folder { margin-left: 4px; }
.a-chev { margin-left: 8px; }
.a-cn { margin-left: 5px; font-size: 12.3px; white-space: nowrap; color: #111; }
.a-chev2 { margin-left: 7px; }
.a-in { margin-left: 7px; }
.a-dd { margin-left: auto; margin-right: 2px; }
.a-ref { width: 18px; height: 20px; border-left: 1px solid #d9d9d9; display: flex; align-items: center; justify-content: center; }
.a-search { margin-left: 12px; width: 202px; height: 22px; border: 1px solid #d9d9d9; box-sizing: border-box; display: flex; align-items: center; padding: 0 8px; color: #666; justify-content: space-between; }
.x-body { height: 389px; display: flex; align-items: flex-start; }
.nav { width: 156px; display: flex; height: 386px; }
.nav-list { width: 141px; overflow: hidden; margin-top: -1px; height: 387px; }
.nav-row { height: 24px; display: flex; align-items: center; white-space: nowrap; overflow: hidden; }
.nav-row.active { background: #d9d9d9; }
.lv0 { padding-left: 33px; }
.lv1 { padding-left: 41px; }
.lv2 { padding-left: 49px; }
.nav-ic { margin-right: 5px; }
.sb { display: flex; flex-direction: column; align-items: center; background: #f0f0f0; box-sizing: border-box; }
.sb-arrow { margin: 4px 0 3px; }
.sb-thumb { width: 100%; background: #cdcdcd; }
.sb-nav { width: 15px; height: 386px; }
.sb-nav .sb-thumb { margin-top: 235px; height: 112px; }
.sb-end { margin-top: auto; }
.sb-main { width: 15px; margin-top: 2px; height: 367px; }
.sb-main .sb-thumb { margin-top: 171px; height: 162px; }
.pane { width: 614px; display: flex; flex-direction: column; height: 386px; }
.head { height: 21px; display: flex; align-items: center; color: #44546a; position: relative; padding-top: 3px; box-sizing: border-box; }
.sort { position: absolute; left: 141px; top: -1px; }
.head > div { height: 18px; line-height: 18px; border-right: 1px solid #e5e5e5; box-sizing: border-box; padding-left: 6px; }
.h-name { margin-left: 16px; width: 261px; }
.h-date { width: 144px; }
.h-type { width: 120px; }
.h-size { width: 72px; border-right: 0 !important; }
.rows { height: 350px; overflow: hidden; padding-left: 19px; }
.rows .row:first-child { margin-top: -9px; }
.row { height: 21px; width: 594px; box-sizing: border-box; display: flex; align-items: center; white-space: nowrap; border: 1px solid transparent; color: #555; }
.row.hover { background: #e5f3ff; border-color: #e5f3ff; }
.row.selected { background: #cce8ff; border-color: #99d1ff; }
.c-name { width: 257px; padding-left: 4px; box-sizing: border-box; display: flex; align-items: center; color: #1e1e1e; }
.r-ic { margin-right: 4px; }
.c-date { width: 144px; padding-left: 6px; box-sizing: border-box; font-size: 11.1px; }
.c-type { width: 120px; padding-left: 6px; box-sizing: border-box; }
.c-size { width: 71px; text-align: right; font-size: 11.2px; }
.hsb { height: 15px; margin-left: 6px; width: 606px; background: #f0f0f0; display: flex; align-items: center; padding-left: 3px; box-sizing: border-box; }
.hsb-thumb { width: 556px; height: 15px; background: #cdcdcd; margin-left: 3px; }
.hsb-end { margin-left: auto; margin-right: 3px; }
.x-status { height: 22px; display: flex; align-items: center; position: relative; color: #333; padding-bottom: 4px; box-sizing: border-box; }
.st-a { margin-left: 15px; width: 65px; }
.st-b { width: 85px; }
.st-det { position: absolute; left: 737px; top: 0; width: 22px; height: 21px; background: #cce8ff; border: 1px solid #99d1ff; box-sizing: border-box; display: flex; align-items: center; justify-content: center; }
.st-lg { position: absolute; left: 763px; top: 4px; }

/* taskbar */
.taskbar { height: 40px; background: #0a1a28; display: flex; align-items: stretch; }
.start { width: 48px; display: flex; align-items: center; justify-content: center; }
.search { width: 287px; background: #f3f3f3; border-top: 1px solid #ccc; box-sizing: border-box; display: flex; align-items: center; position: relative; overflow: hidden; }
.s-glass { margin-left: 12px; }
.s-text { margin-left: 9px; font-size: 14px; color: #222; font-family: "Open Sans", sans-serif; }
.s-globe { position: absolute; right: 4px; bottom: 0; }
.tb { width: 49px; display: flex; align-items: center; justify-content: center; box-sizing: border-box; }
.tb-task { margin-right: 2px; margin-left: 1px; }
.tb-exp { background: #2d3c49; border-bottom: 2px solid #76b9ed; }
.tb-word { border-bottom: 2px solid transparent; position: relative; }
.tb-word::after { content: ""; position: absolute; left: 5px; right: 5px; bottom: -2px; height: 2px; background: #76b9ed; }
.tb-w { font: 700 10px "Liberation Sans", sans-serif; fill: #fff; text-anchor: middle; }
.tray { margin-left: auto; display: flex; color: #fff; align-items: center; }
.tr { width: 24px; display: flex; justify-content: center; }
.clock { width: 59px; text-align: center; font-size: 11.5px; line-height: 17px; }
.notif { width: 50px; display: flex; justify-content: center; }
.show { width: 8px; height: 40px; border-left: 1px solid transparent; box-sizing: border-box; position: relative; }
.show::after { content: ""; position: absolute; left: 2px; top: 0; bottom: 0; width: 1px; background: #5a6672; }

/* watermark */
.mark { position: absolute; left: 1036px; top: 608px; filter: drop-shadow(1px 1px 0 rgba(0, 0, 0, .1)); }
.m-text { font: 400 46px "Liberation Sans", sans-serif; fill: none; stroke: #fff; stroke-opacity: .7; stroke-width: 1.5; }
</style>
